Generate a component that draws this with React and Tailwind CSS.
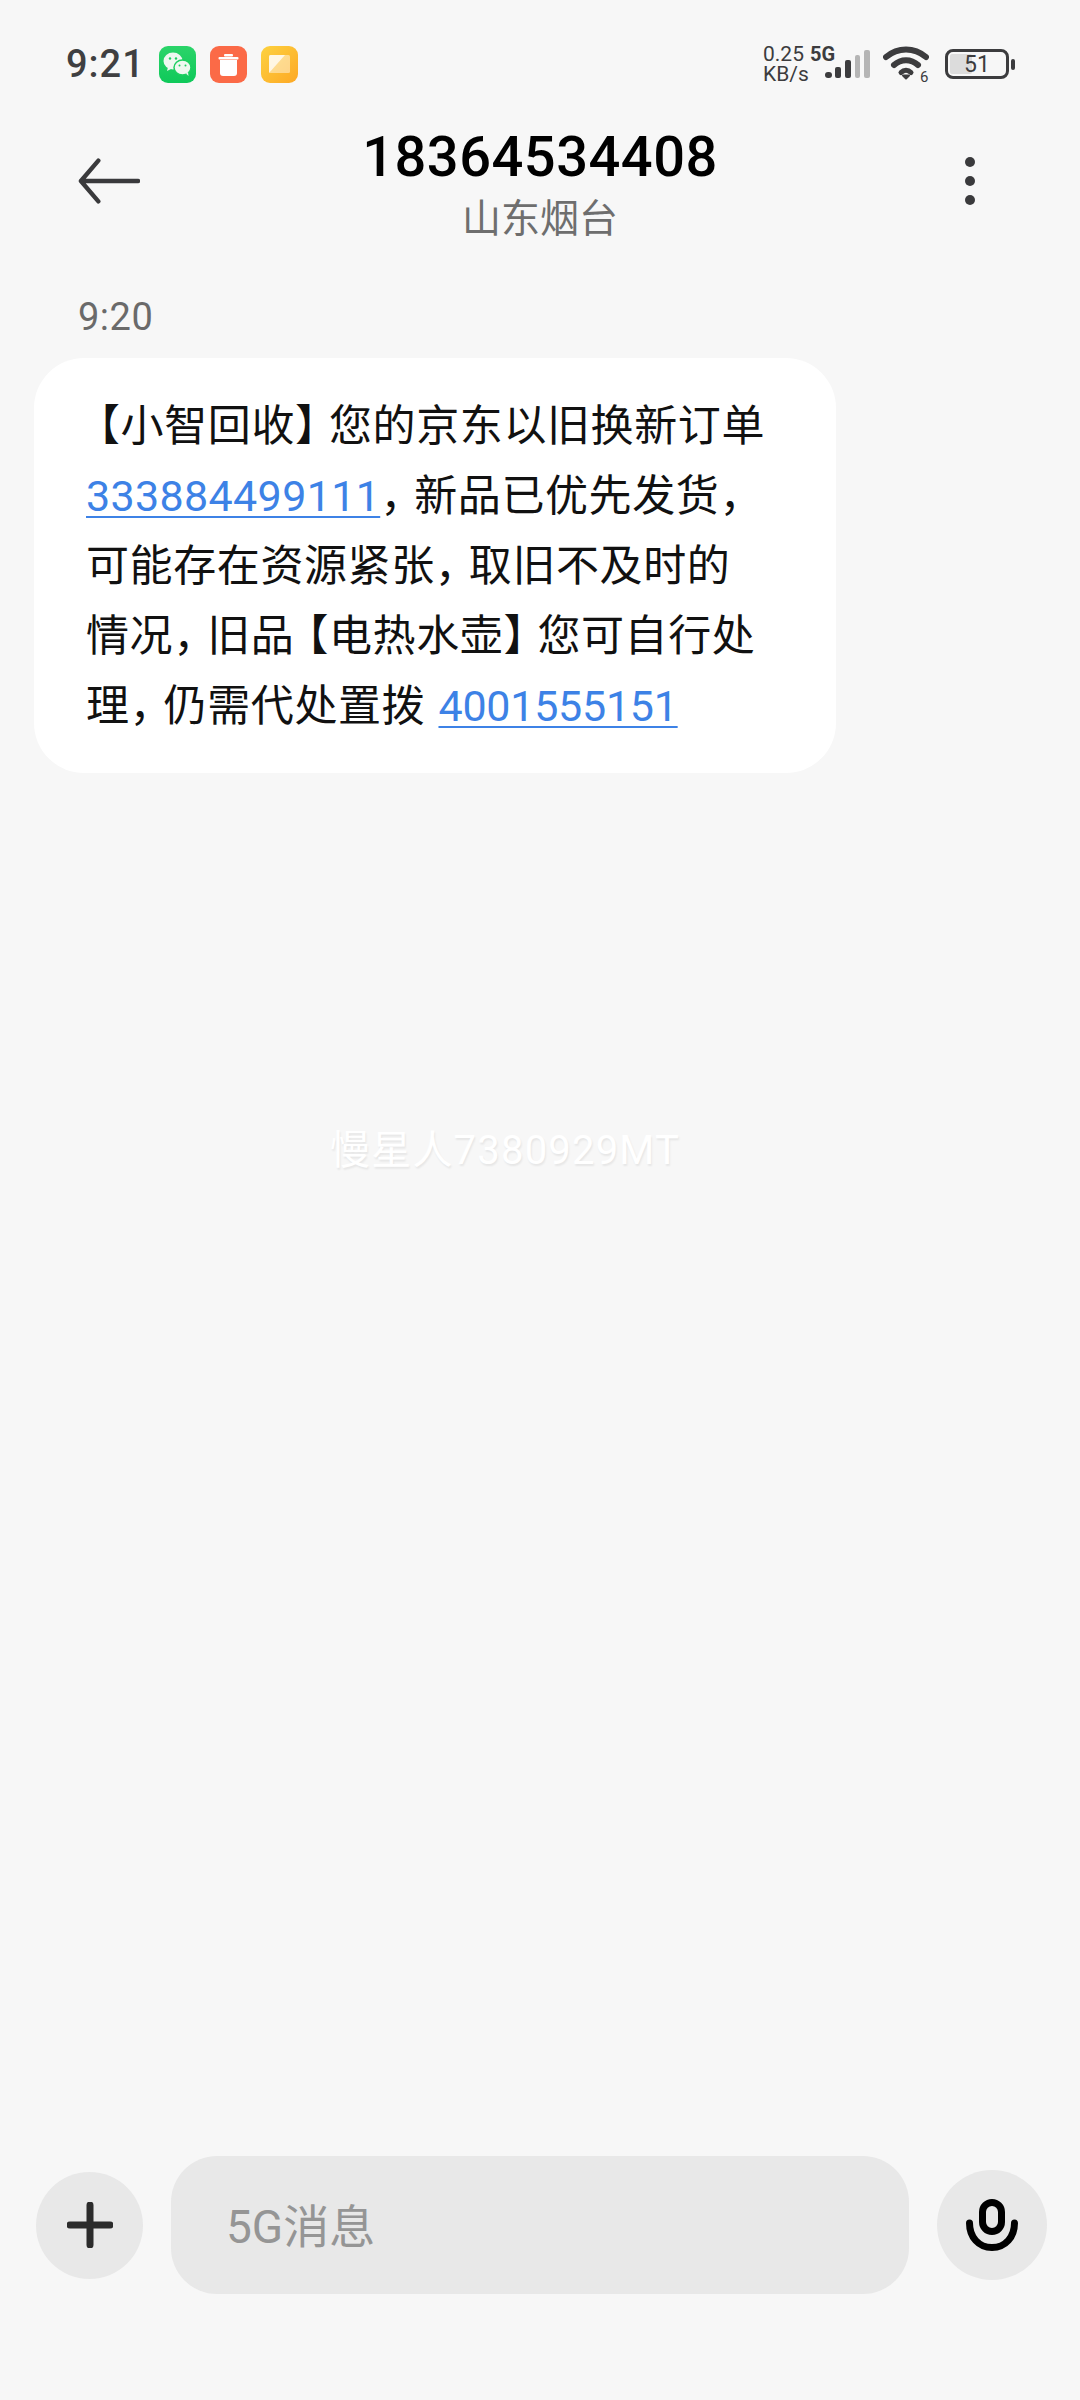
import { useState } from "react";

const cjk = "font-['Roboto','Noto_Sans_CJK_SC',sans-serif]";

function WeChatIcon() {
  return (
    <svg viewBox="0 0 37 37" className="w-[37px] h-[37px]">
      <defs>
        <linearGradient id="wx" x1="0" y1="0" x2="0" y2="1">
          <stop offset="0" stopColor="#2bd469" />
          <stop offset="1" stopColor="#0fc95a" />
        </linearGradient>
      </defs>
      <rect width="37" height="37" rx="9" fill="url(#wx)" />
      <ellipse cx="14" cy="15" rx="9.5" ry="8.5" fill="#eef8f0" />
      <path d="M9 21l-1 4 5-2.5z" fill="#eef8f0" />
      <ellipse cx="23.5" cy="21.5" rx="8.5" ry="7.5" fill="#eef8f0" stroke="#1ccf60" strokeWidth="1.5" />
      <path d="M27 27.5l2.5 2.5-.5-4z" fill="#eef8f0" />
      <circle cx="11" cy="12.5" r="1.2" fill="#1ccf60" />
      <circle cx="17" cy="12.5" r="1.2" fill="#1ccf60" />
      <circle cx="20.5" cy="19.5" r="1" fill="#1ccf60" />
      <circle cx="26.5" cy="19.5" r="1" fill="#1ccf60" />
    </svg>
  );
}

function TrashIcon() {
  return (
    <svg viewBox="0 0 37 37" className="w-[37px] h-[37px]">
      <rect width="37" height="37" rx="9" fill="#fb6a47" />
      <rect x="8.500" y="11" width="20" height="2.500" rx="1" fill="#fff" />
      <rect x="14" y="8" width="9" height="2.500" rx="1" fill="#fff" />
      <path d="M10 14h17v13a3 3 0 0 1-3 3H13a3 3 0 0 1-3-3z" fill="#fff" />
    </svg>
  );
}

function NoteIcon() {
  return (
    <svg viewBox="0 0 37 37" className="w-[37px] h-[37px]">
      <defs>
        <linearGradient id="nt" x1="0" y1="0" x2="1" y2="1">
          <stop offset="0" stopColor="#fdd23f" />
          <stop offset="1" stopColor="#fda825" />
        </linearGradient>
      </defs>
      <rect width="37" height="37" rx="9" fill="url(#nt)" />
      <rect x="8" y="9" width="21" height="18" rx="1.500" fill="#fff" opacity="0.45" />
      <path d="M8 10.500A1.500 1.500 0 0 1 9.500 9H24L8 27z" fill="#fff" opacity="0.75" />
    </svg>
  );
}

function StatusBar() {
  return (
    <div className="h-[128px] flex items-center pl-[66px] pr-[65px]">
      <span className="text-[38px] leading-none font-medium tracking-[1px] text-[#3f3f41] font-['Roboto',sans-serif] w-[92px]">9:21</span>
      <div className="flex gap-[14px] ml-[1px]">
        <WeChatIcon />
        <TrashIcon />
        <NoteIcon />
      </div>
      <div className="ml-auto flex items-center">
        <div className="text-[#3c3c3e] text-[21px] leading-[20px] font-['Roboto',sans-serif] w-[47px]">
          <div>0.25</div>
          <div>KB/s</div>
        </div>
        <div className="relative w-[60px] h-[36px]">
          <svg viewBox="0 0 45 28" className="absolute left-[15px] top-[4px] w-[45px] h-[28px]">
            <rect x="0" y="22" width="7" height="6" rx="3" fill="#3c3c3e" />
            <rect x="10" y="17" width="6" height="11" rx="2" fill="#3c3c3e" />
            <rect x="20" y="10" width="6" height="18" rx="2" fill="#3c3c3e" />
            <rect x="30" y="5" width="5" height="23" rx="2" fill="#b5b5b5" />
            <rect x="39" y="0" width="6" height="28" rx="2" fill="#b5b5b5" />
          </svg>
          <span className="absolute left-0 top-[-2px] text-[20px] leading-[20px] font-bold text-[#3c3c3e] font-['Roboto',sans-serif]">5G</span>
        </div>
        <div className="relative w-[46px] h-[36px] ml-[13px]">
          <svg viewBox="0 0 46 34" className="w-[46px] h-[34px]">
            <path d="M3 11C15 1 31 1 43 11" fill="none" stroke="#3c3c3e" strokeWidth="6" strokeLinecap="round" />
            <path d="M11 19C18 12.500 28 12.500 35 19" fill="none" stroke="#3c3c3e" strokeWidth="6" strokeLinecap="round" />
            <path d="M18 26.500C21 23.500 25 23.500 28 26.500" fill="none" stroke="#3c3c3e" strokeWidth="5" strokeLinecap="round" />
            <path d="M20 29.500h6l-3 3z" fill="#3c3c3e" stroke="#3c3c3e" strokeWidth="2" strokeLinejoin="round" />
          </svg>
          <span className="absolute left-[37px] top-[25px] text-[15px] leading-[13px] text-[#3c3c3e] font-['Roboto',sans-serif]">6</span>
        </div>
        <div className="flex items-center ml-[16px]">
          <div className="relative w-[64px] h-[30px] rounded-[8px] border-[3px] border-[#3c3c3e] p-[2px] flex">
            <div className="w-[40%] bg-[#dcdcdc] rounded-[2px]" />
            <span className="absolute inset-0 flex items-center justify-center text-[23px] leading-none text-[#3c3c3e] font-['Roboto',sans-serif]">51</span>
          </div>
          <div className="w-[4px] h-[11px] bg-[#3c3c3e] rounded-[2px] ml-[2px]" />
        </div>
      </div>
    </div>
  );
}

function Header() {
  return (
    <div className="grid grid-cols-[1fr_auto_1fr] grid-rows-[106px] items-center">
      <div className="pl-[78px]">
        <svg viewBox="0 0 64 48" className="w-[62px] h-[48px] block">
          <path d="M62 24H3M21 3 3 24l18 21" fill="none" stroke="#3a3a3c" strokeWidth="4.500" strokeLinecap="round" strokeLinejoin="round" />
        </svg>
      </div>
      <div className="flex flex-col items-center mt-[12px]">
        <div className="text-[56px] leading-[50px] font-medium tracking-[0.5px] text-black font-['Roboto',sans-serif]">18364534408</div>
        <div className={`text-[39px] leading-[46px] mt-[14px] text-[#6e6e6e] ${cjk}`}>山东烟台</div>
      </div>
      <div className="flex justify-end pr-[102px]">
        <div className="flex flex-col gap-[9px] w-[16px] items-center">
          <span className="w-[10px] h-[10px] rounded-full bg-[#3a3a3c]" />
          <span className="w-[10px] h-[10px] rounded-full bg-[#3a3a3c]" />
          <span className="w-[10px] h-[10px] rounded-full bg-[#3a3a3c]" />
        </div>
      </div>
    </div>
  );
}

function PhoneLink({ className, children }) {
  return <a className={`text-[#3d82e6] underline underline-offset-[5px] decoration-[2px] font-['Roboto',sans-serif] ${className}`}>{children}</a>;
}

// the reference squeezes full-width punctuation down to about 0.8em
function Close({ children }) {
  return <span className="tracking-[-9px]">{children}</span>;
}

function Open({ children }) {
  return <span className="ml-[-9px]">{children}</span>;
}

function MessageBubble() {
  return (
    <div className="ml-[34px] w-[802px] h-[415px] bg-white rounded-[50px] pl-[52px] pt-[33px]">
      <p className={`text-[43px] leading-[70px] tracking-[0.6px] text-[#111111] whitespace-nowrap ${cjk}`}>
        <Open>【</Open>小智回收<Close>】</Close>您的京东以旧换新订单
        <br />
        <PhoneLink className="tracking-[0.35px]">333884499111</PhoneLink><Close>，</Close>新品已优先发货<Close>，</Close>
        <br />
        可能存在资源紧张<Close>，</Close>取旧不及时的
        <br />
        情况<Close>，</Close>旧品<Open>【</Open>电热水壶<Close>】</Close>您可自行处
        <br />
        理<Close>，</Close>仍需代处置拨 <PhoneLink className="tracking-[-0.25px] ml-[2px]">4001555151</PhoneLink>
      </p>
    </div>
  );
}

function Composer() {
  const [text, setText] = useState("");
  return (
    <div className="flex items-center pl-[36px] pr-[33px] mb-[106px] mt-auto">
      <button className="w-[107px] h-[107px] rounded-full bg-[#e8e8e8] flex items-center justify-center">
        <svg viewBox="0 0 46 46" className="w-[46px] h-[46px]">
          <path d="M23 3v40M3 23h40" stroke="#2b2b2b" strokeWidth="7" strokeLinecap="round" />
        </svg>
      </button>
      <div className="ml-[28px] w-[738px] h-[138px] rounded-[46px] bg-[#e8e8e8] flex items-center pl-[55px]">
        <input
          value={text}
          onChange={(e) => setText(e.target.value)}
          placeholder="5G消息"
          className={`bg-transparent outline-none w-full text-[46px] pt-[4px] text-[#1a1a1a] placeholder:text-[#959595] ${cjk}`}
        />
      </div>
      <button className="ml-auto w-[110px] h-[110px] rounded-full bg-[#e8e8e8] flex items-center justify-center">
        <svg viewBox="0 0 52 52" className="w-[52px] h-[52px]">
          <rect x="16.500" y="3.500" width="19" height="29" rx="9.500" fill="none" stroke="#000" strokeWidth="7" />
          <path d="M3.500 24c0 14 9 24.500 22.500 24.500s22.500-10.500 22.500-24.500" fill="none" stroke="#000" strokeWidth="7" strokeLinecap="round" />
        </svg>
      </button>
    </div>
  );
}

export default function App() {
  return (
    <div className="relative w-[1080px] h-[2400px] flex flex-col bg-[#f7f7f7] overflow-hidden">
      <StatusBar />
      <Header />
      <div className="text-[38px] leading-[44px] tracking-[0.5px] text-[#6a6a6a] ml-[78px] mt-[61px] mb-[19px] font-['Roboto',sans-serif]">9:20</div>
      <MessageBubble />
      {/* watermark sits over the empty thread */}
      <div className={`absolute left-[330px] top-[1126px] text-[40px] leading-[50px] tracking-[1.2px] text-white [text-shadow:1px_2px_2px_rgba(0,0,0,0.07)] ${cjk}`}>
        慢星人7380929MT
      </div>
      <Composer />
    </div>
  );
}
